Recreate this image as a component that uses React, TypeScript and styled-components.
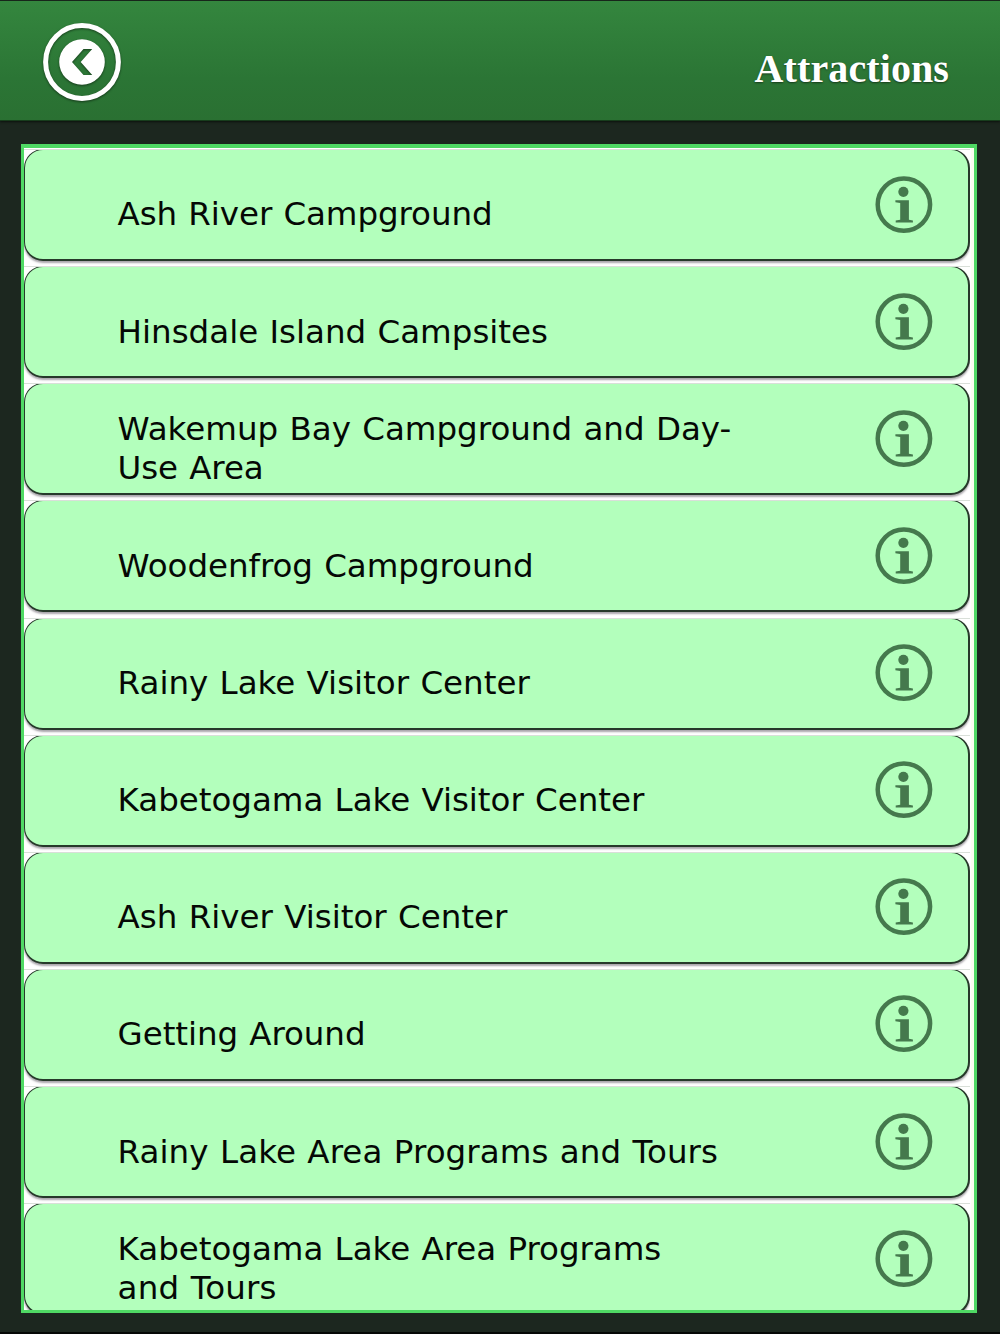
import React from "react";
import styled, { createGlobalStyle } from "styled-components";

const GlobalStyle = createGlobalStyle`
  *, *::before, *::after { box-sizing: border-box; }
  body { margin: 0; background: #1c271f; }
`;

const Screen = styled.div`
  display: flex;
  flex-direction: column;
  width: 1000px;
  height: 1334px;
  overflow: hidden;
  background: #1c271f;
  border-top: 1px solid #17251a;
  border-bottom: 2px solid #050806;
`;

const Header = styled.header`
  flex: none;
  display: flex;
  justify-content: space-between;
  height: 120px;
  padding: 20px 51px 0 41px;
  background: linear-gradient(#34863e, #2b7535 65%, #2a7032);
  border-bottom: 1px solid #173d1c;
  box-shadow: 0 1px 2px #0c120d;
`;

const BackButton = styled.button`
  width: 82px;
  height: 84px;
  padding: 0;
  border: 0;
  background: none;
`;

const Title = styled.h1`
  margin: 25px 0 0;
  font: bold 40px/46px "Liberation Serif", serif;
  letter-spacing: 0.1px;
  color: #fff;
  text-shadow: 0 1px 2px rgba(0, 0, 0, 0.5);
`;

const List = styled.main`
  flex: none;
  width: 956px;
  height: 1169px;
  margin: 23px 0 0 21px;
  padding-top: 1px;
  overflow: hidden;
  background: linear-gradient(90deg, #fff 947px, #fbfff0 947px);
  border: 3px solid #4fd964;
  border-top-width: 4px;
`;

const Row = styled.section`
  height: 117.15px;
  width: 946px;
  overflow: hidden;
  border-top: 1px solid #d9dfd9;
`;

const Card = styled.div`
  display: flex;
  justify-content: space-between;
  align-items: center;
  width: 946px;
  height: 112px;
  margin-top: -1px;
  padding: 0 35px 0 92.6px;
  background: #b3ffbc;
  border: 2px solid #26392a;
  border-left-width: 1px;
  border-top-width: 1px;
  border-radius: 19px;
  box-shadow: 0 2px 2px rgba(40, 30, 45, 0.4);
`;

const Label = styled.div`
  padding-top: 20.8px;
  font: 32.5px/39px Verdana, "DejaVu Sans", sans-serif;
  word-spacing: 1px;
  color: #050805;
  white-space: nowrap;
`;

const Line = styled.div<{ $track: number }>`
  letter-spacing: ${(p) => p.$track}px;
`;

const InfoIcon = () => (
  <svg width="58" height="58" viewBox="0 0 58 58" fill="#45794d">
    <circle cx="28.9" cy="28.6" r="26.2" fill="none" stroke="#45794d" strokeWidth="4.5" />
    <circle cx="28.4" cy="15.8" r="5.1" />
    <path d="M20.4 24.3h13.5v19.5l4 .8v2H20.7v-2l4.5-.8V26.9l-4.8-.6z" />
  </svg>
);

const BackIcon = () => (
  <svg width="82" height="84" viewBox="0 0 82 84">
    <g style={{ filter: "drop-shadow(0 1px 1px rgba(0,0,0,.5))" }}>
      <circle cx="41" cy="41" r="36.4" fill="none" stroke="#fff" strokeWidth="5" />
      <path
        fill="#fff"
        fillRule="evenodd"
        d="M41 18.2a22.8 22.8 0 1 0 0 45.6a22.8 22.8 0 1 0 0-45.6zM42.5 28h8.7L39.7 41l11.5 13h-8.7L31 41z"
      />
    </g>
  </svg>
);

const items: [string, number][][] = [
  [["Ash River Campground", -0.08]],
  [["Hinsdale Island Campsites", 0]],
  [["Wakemup Bay Campground and Day-", 0], ["Use Area", -0.1]],
  [["Woodenfrog Campground", -0.05]],
  [["Rainy Lake Visitor Center", 0]],
  [["Kabetogama Lake Visitor Center", -0.03]],
  [["Ash River Visitor Center", 0]],
  [["Getting Around", -0.07]],
  [["Rainy Lake Area Programs and Tours", 0.07]],
  [["Kabetogama Lake Area Programs", -0.03], ["and Tours", 0.17]],
];

export default function App() {
  return (
    <>
      <GlobalStyle />
      <Screen>
        <Header>
          <BackButton aria-label="Back">
            <BackIcon />
          </BackButton>
          <Title>Attractions</Title>
        </Header>
        <List>
          {items.map((lines) => (
            <Row key={lines[0][0]}>
              <Card>
                <Label>
                  {lines.map(([text, track]) => (
                    <Line key={text} $track={track}>{text}</Line>
                  ))}
                </Label>
                <InfoIcon />
              </Card>
            </Row>
          ))}
        </List>
      </Screen>
    </>
  );
}
